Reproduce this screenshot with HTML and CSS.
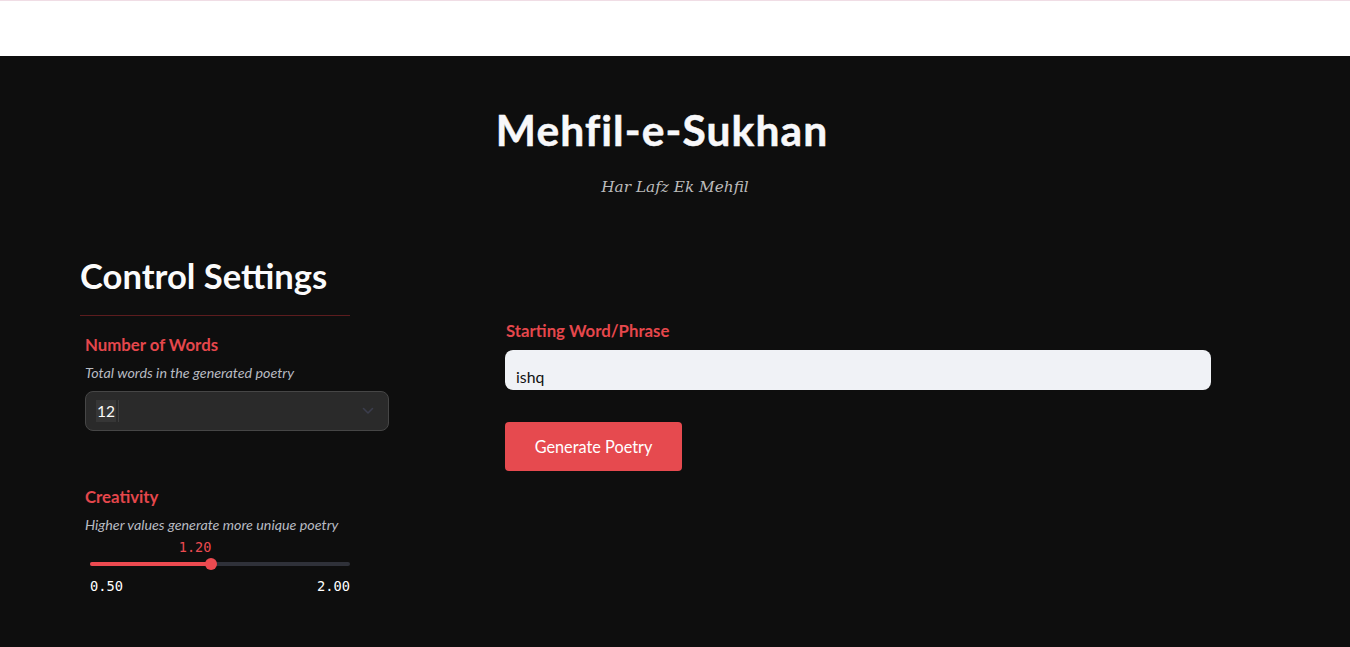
FILE: index.html
```html
<!DOCTYPE html>
<html>
<head>
<meta charset="utf-8">
<link rel="stylesheet" href="styles.css">
</head>
<body>
<header class="topbar"></header>
<main class="app">
  <div class="hero">
    <h1 class="title">Mehfil-e-Sukhan</h1>
    <p class="tagline">Har Lafz Ek Mehfil</p>
  </div>
  <div class="columns">
    <section class="controls">
      <h2 class="controls-title">Control Settings</h2>
      <hr class="divider">
      <div class="field">
        <div class="label">Number of Words</div>
        <div class="hint">Total words in the generated poetry</div>
        <div class="select">
          <span class="select-value"><span class="sel">12</span><span class="caret"></span></span>
          <svg class="chevron" width="12" height="8" viewBox="0 0 12 8"><path d="M1.5 1.5 L6 6 L10.5 1.5" fill="none" stroke="#3b3d4c" stroke-width="1.6" stroke-linecap="round" stroke-linejoin="round"/></svg>
        </div>
      </div>
      <div class="field creativity">
        <div class="label">Creativity</div>
        <div class="hint">Higher values generate more unique poetry</div>
        <div class="slider">
          <div class="slider-track">
            <div class="slider-fill" style="width:46.67%"></div>
            <div class="slider-value" style="left:46.67%">1.20</div>
            <div class="slider-thumb" style="left:46.67%"></div>
          </div>
          <div class="slider-range"><span>0.50</span><span>2.00</span></div>
        </div>
      </div>
    </section>
    <section class="composer">
      <div class="label">Starting Word/Phrase</div>
      <div class="text-input">ishq</div>
      <button class="btn">Generate Poetry</button>
    </section>
  </div>
</main>
</body>
</html>
```

FILE: styles.css
```css
* { box-sizing: border-box; }
html, body { margin: 0; padding: 0; }
body {
  background: #0e0e0e;
  font-family: Lato, "Open Sans", sans-serif;
  color: #fafafa;
  height: 647px;
  overflow: hidden;
}
.topbar {
  height: 56px;
  background: #ffffff;
  border-top: 1px solid #f0dde5;
}
.app {
  padding: 0 80px;
}
.hero {
  text-align: center;
  padding-top: 49px;
}
.title {
  margin: 0;
  font-size: 42.5px;
  line-height: 50px;
  font-weight: 700;
  letter-spacing: 1.1px;
  color: #f8f8fa;
  padding-right: 26px;
  -webkit-text-stroke: 0.5px #f8f8fa;
}
.tagline {
  margin: 22px 0 0;
  font-family: "DejaVu Serif", "Liberation Serif", serif;
  font-style: italic;
  font-size: 15.3px;
  line-height: 20px;
  color: #bcbcbc;
}
.columns {
  display: flex;
  margin-top: 57px;
}
.controls {
  width: 310px;
  flex: none;
}
.controls-title {
  margin: 0;
  font-size: 34.6px;
  line-height: 44px;
  font-weight: 700;
  color: #fbfbfb;
}
.divider {
  margin: 17px 0 0;
  width: 270px;
  border: 0;
  border-top: 1px solid #5c1c1e;
}
.field {
  padding-left: 5px;
}
.label {
  font-weight: 700;
  font-size: 16.8px;
  line-height: 20px;
  color: #e5474c;
}
.controls .field:first-of-type .label { margin-top: 19px; }
.hint {
  margin-top: 9px;
  font-style: italic;
  font-size: 14.3px;
  line-height: 18px;
  color: #b8bbc2;
}
.select {
  margin-top: 9px;
  width: 304px;
  height: 40px;
  background: #2a2a2a;
  border: 1px solid #464646;
  border-radius: 8px;
  display: flex;
  align-items: center;
  justify-content: space-between;
  padding: 0 14px 0 10px;
}
.select-value {
  display: flex;
  align-items: center;
  font-size: 15.5px;
}
.sel {
  background: #363636;
  padding: 0 1px;
  line-height: 22px;
}
.caret {
  width: 1px;
  height: 22px;
  background: #3e3e3e;
  margin-left: 2px;
}
.creativity { margin-top: 56px; }
.slider {
  padding: 0 40px 0 5px;
  margin-top: 28px;
}
.slider-track {
  position: relative;
  height: 4px;
  border-radius: 2px;
  background: #2f3139;
}
.slider-fill {
  height: 4px;
  border-radius: 2px;
  background: #ec4a50;
}
.slider-thumb {
  position: absolute;
  top: -4px;
  width: 12px;
  height: 12px;
  margin-left: -6px;
  border-radius: 50%;
  background: #ec4a50;
}
.slider-value {
  position: absolute;
  bottom: 11px;
  transform: translateX(-100%);
  font-family: "DejaVu Sans Mono", "Liberation Mono", monospace;
  font-size: 13.5px;
  line-height: 16px;
  color: #ec4a50;
}
.slider-range {
  display: flex;
  justify-content: space-between;
  margin-top: 12px;
  font-family: "DejaVu Sans Mono", "Liberation Mono", monospace;
  font-size: 13.7px;
  line-height: 16px;
  color: #ffffff;
}
.composer {
  margin-left: 115px;
  width: 706px;
  padding-top: 67px;
}
.composer .label { padding-left: 1px; }
.text-input {
  margin-top: 9px;
  height: 40px;
  background: #f0f2f6;
  border-radius: 8px;
  color: #111;
  font-size: 15.8px;
  padding: 17px 11px 0;
  line-height: 20px;
}
.btn {
  margin-top: 32px;
  width: 177px;
  height: 49px;
  border: 0;
  border-radius: 4px;
  background: #e64a4f;
  color: #ffffff;
  font-family: Lato, "Open Sans", sans-serif;
  font-size: 16.3px;
  padding: 0;
}
```
